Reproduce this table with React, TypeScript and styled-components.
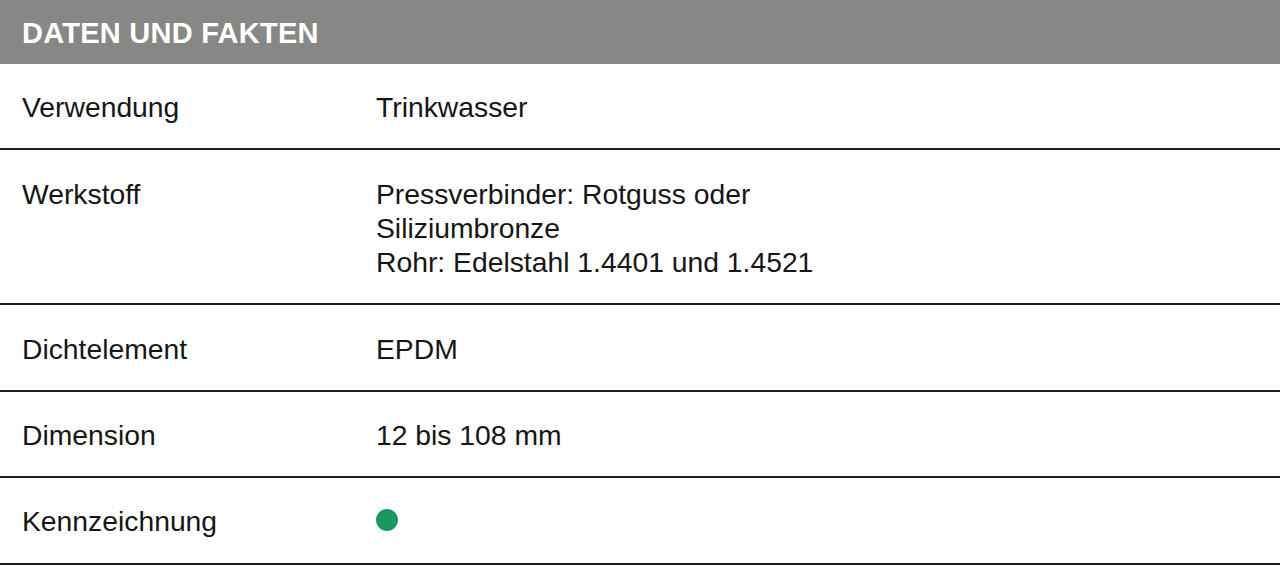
import React from "react";
import styled, { createGlobalStyle } from "styled-components";

const GlobalStyle = createGlobalStyle`
  body {
    margin: 0;
    background: #ffffff;
    font-family: "Liberation Sans", Arial, sans-serif;
  }
`;

const Table = styled.section`
  width: 1280px;
  display: flex;
  flex-direction: column;
`;

const Header = styled.h2`
  margin: 0;
  height: 64px;
  box-sizing: border-box;
  display: flex;
  align-items: center;
  padding: 3px 22px 0;
  background-color: #878785;
  color: #ffffff;
  font-size: 29px;
  font-weight: 700;
  letter-spacing: 0.25px;
`;

const Row = styled.div`
  display: grid;
  grid-template-columns: 354px 1fr;
  padding: 26.2px 22px 24px;
  border-bottom: 2px solid #1e1e1e;
  color: #161616;
  font-size: 28.3px;
  line-height: 34.25px;
`;

const Label = styled.div``;

const Value = styled.div`
  display: flex;
  flex-direction: column;
`;

const Dot = styled.span`
  display: inline-block;
  width: 22px;
  height: 22px;
  margin-top: 5px;
  border-radius: 50%;
  background-color: #1e9862;
`;

type Fact = {
  label: string;
  lines?: string[];
  marker?: boolean;
};

const facts: Fact[] = [
  { label: "Verwendung", lines: ["Trinkwasser"] },
  {
    label: "Werkstoff",
    lines: ["Pressverbinder: Rotguss oder", "Siliziumbronze", "Rohr: Edelstahl 1.4401 und 1.4521"],
  },
  { label: "Dichtelement", lines: ["EPDM"] },
  { label: "Dimension", lines: ["12 bis 108 mm"] },
  { label: "Kennzeichnung", marker: true },
];

const App = () => (
  <>
    <GlobalStyle />
    <Table>
      <Header>DATEN UND FAKTEN</Header>
      {facts.map((fact) => (
        <Row key={fact.label}>
          <Label>{fact.label}</Label>
          <Value>
            {fact.lines && fact.lines.map((line) => <span key={line}>{line}</span>)}
            {fact.marker && <Dot />}
          </Value>
        </Row>
      ))}
    </Table>
  </>
);

export default App;
